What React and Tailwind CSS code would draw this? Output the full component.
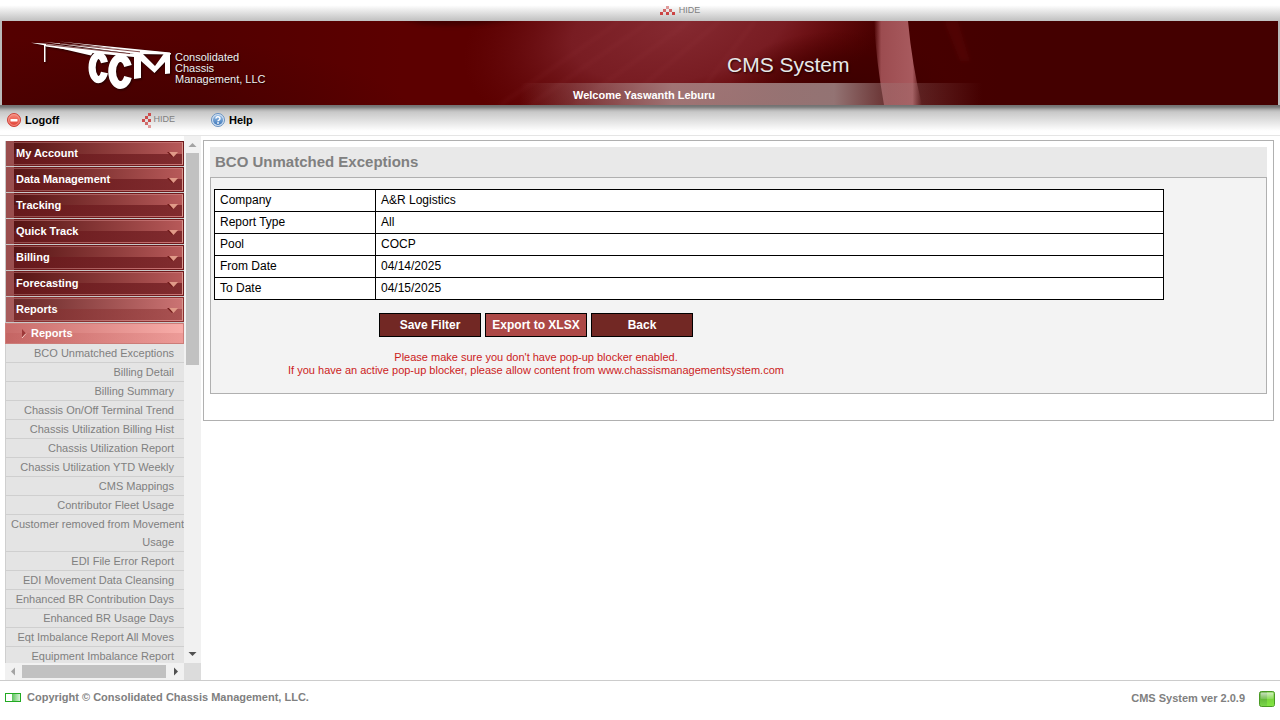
import React from "react";

const MENU = ["My Account", "Data Management", "Tracking", "Quick Track", "Billing", "Forecasting"];

const REPORTS = [
  "BCO Unmatched Exceptions",
  "Billing Detail",
  "Billing Summary",
  "Chassis On/Off Terminal Trend",
  "Chassis Utilization Billing Hist",
  "Chassis Utilization Report",
  "Chassis Utilization YTD Weekly",
  "CMS Mappings",
  "Contributor Fleet Usage",
  "Customer\u00a0removed\u00a0from\u00a0Movement Usage",
  "EDI File Error Report",
  "EDI Movement Data Cleansing",
  "Enhanced BR Contribution Days",
  "Enhanced BR Usage Days",
  "Eqt Imbalance Report All Moves",
  "Equipment Imbalance Report",
];

const FILTERS = [
  ["Company", "A&R Logistics"],
  ["Report Type", "All"],
  ["Pool", "COCP"],
  ["From Date", "04/14/2025"],
  ["To Date", "04/15/2025"],
];

function HideUpIcon() {
  return (
    <svg width="15" height="9" viewBox="0 0 15 9" shapeRendering="crispEdges" aria-hidden="true">
      <path fill="#e09a9a" d="M6 0h3v3h-3z" />
      <path fill="#d06a6a" d="M3 3h3v3h-3zM9 3h3v3h-3z" />
      <path fill="#cc4444" d="M0 6h3v3h-3zM6 6h3v3h-3zM12 6h3v3h-3z" />
    </svg>
  );
}

function HideLeftIcon() {
  return (
    <svg width="9" height="15" viewBox="0 0 9 15" shapeRendering="crispEdges" aria-hidden="true">
      <path fill="#cc4c4c" d="M6 0h3v3h-3zM3 3h3v3h-3zM0 6h3v3h-3zM6 6h3v3h-3z" />
      <path fill="#d06a6a" d="M3 9h3v3h-3z" />
      <path fill="#e09a9a" d="M6 12h3v3h-3z" />
    </svg>
  );
}

function LogoffIcon() {
  return (
    <svg width="14" height="14" viewBox="0 0 14 14" aria-hidden="true">
      <defs>
        <linearGradient id="red" x1="0" y1="0" x2="0" y2="1">
          <stop offset="0" stopColor="#f58a7c" />
          <stop offset="1" stopColor="#e03c30" />
        </linearGradient>
      </defs>
      <circle cx="7" cy="7" r="6.5" fill="url(#red)" stroke="#cc4038" />
      <circle cx="7" cy="7" r="5.4" fill="none" stroke="#f6a094" strokeWidth=".8" />
      <rect x="3.5" y="6" width="7" height="2.4" rx=".5" fill="#fff" />
    </svg>
  );
}

function HelpIcon() {
  return (
    <svg width="14" height="14" viewBox="0 0 14 14" aria-hidden="true">
      <defs>
        <linearGradient id="blue" x1="0" y1="0" x2="0" y2="1">
          <stop offset="0" stopColor="#9cc0e6" />
          <stop offset="1" stopColor="#3f78ba" />
        </linearGradient>
      </defs>
      <circle cx="7" cy="7" r="6.5" fill="#d4e2f2" stroke="#6690c0" />
      <circle cx="7" cy="7" r="5" fill="url(#blue)" />
      <path d="M5 5.6a2 1.8 0 1 1 3 1.5q-1 .5-1 1.2" fill="none" stroke="#fff" strokeWidth="1.5" />
      <rect x="6.2" y="9.2" width="1.6" height="1.6" fill="#fff" />
    </svg>
  );
}

function BannerArt() {
  return (
    <svg className="absolute left-0 top-0" width="1000" height="84" viewBox="2 21 1000 84" aria-hidden="true">
      <defs>
        <linearGradient id="base" x1="0" x2="1">
          <stop offset="0" stopColor="#540000" />
          <stop offset=".2" stopColor="#520000" />
          <stop offset=".4" stopColor="#5c0000" />
          <stop offset=".8" stopColor="#5c0000" />
          <stop offset=".87" stopColor="#480000" />
          <stop offset="1" stopColor="#440000" />
        </linearGradient>
        <radialGradient id="low" gradientUnits="userSpaceOnUse" cx="0" cy="0" r="1" gradientTransform="translate(120 125) scale(300 90)">
          <stop offset="0" stopColor="#300000" stopOpacity=".45" />
          <stop offset="1" stopColor="#300000" stopOpacity="0" />
        </radialGradient>
        <radialGradient id="glow" gradientUnits="userSpaceOnUse" cx="0" cy="0" r="1" gradientTransform="translate(680 25) rotate(-12) scale(220 110)">
          <stop offset="0" stopColor="#8a2e36" stopOpacity=".9" />
          <stop offset=".5" stopColor="#82262e" stopOpacity=".75" />
          <stop offset="1" stopColor="#6c1014" stopOpacity="0" />
        </radialGradient>
        <radialGradient id="shade" gradientUnits="userSpaceOnUse" cx="0" cy="0" r="1" gradientTransform="translate(850 85) scale(120 55)">
          <stop offset="0" stopColor="#3c0000" stopOpacity=".95" />
          <stop offset=".5" stopColor="#400000" stopOpacity=".7" />
          <stop offset="1" stopColor="#480000" stopOpacity="0" />
        </radialGradient>
        <linearGradient id="streak" x1="0" x2="1">
          <stop offset="0" stopColor="#a05054" stopOpacity="0" />
          <stop offset=".15" stopColor="#9c4c50" />
          <stop offset=".8" stopColor="#a85a5e" />
          <stop offset="1" stopColor="#a05054" stopOpacity="0" />
        </linearGradient>
        <linearGradient id="band" gradientUnits="userSpaceOnUse" x1="520" y1="0" x2="982" y2="0">
          <stop offset="0" stopColor="#a88484" stopOpacity="0" />
          <stop offset=".33" stopColor="#a88484" stopOpacity=".85" />
          <stop offset=".68" stopColor="#9c8080" stopOpacity=".9" />
          <stop offset=".8" stopColor="#a07878" stopOpacity=".4" />
          <stop offset="1" stopColor="#a07878" stopOpacity="0" />
        </linearGradient>
        <filter id="soft" x="-20%" y="-50%" width="140%" height="200%">
          <feGaussianBlur stdDeviation="2" />
        </filter>
      </defs>
      <rect x="2" y="21" width="1000" height="84" fill="url(#base)" />
      <rect x="2" y="21" width="1000" height="84" fill="url(#low)" />
      <rect x="400" y="21" width="602" height="84" fill="url(#glow)" />
      <path d="M390 16H530Q470 30 420 24Z" fill="#300000" opacity=".6" filter="url(#soft)" />
      <rect x="700" y="21" width="302" height="84" fill="url(#shade)" />
      <g stroke="#b05058" strokeWidth="2" opacity=".16" filter="url(#soft)">
        <path d="M620 21L500 105M650 21L530 105M690 21L575 105M720 21L620 105M755 21L690 105" />
      </g>
      <path d="M874 21H908Q912 65 922 105H884Q876 60 874 21Z" fill="url(#streak)" />
      <path d="M944 21h14l12 40h-10z" fill="#6a0808" opacity=".3" filter="url(#soft)" />
      <rect x="520" y="83" width="462" height="22" fill="url(#band)" />
    </svg>
  );
}

function Logo() {
  return (
    <svg width="144" height="54" viewBox="29 39 144 54" role="img" aria-label="CCM" className="drop-shadow-[1px_1px_1px_#200000]">
      <g fill="#fff">
        <path d="M31 42.800L44 43.500 134 54 134 57 92 53 46 46.500 44 45.200Z" />
        <path d="M44 42L171 53 171 54.500 134 54Z" />
        <path d="M59 41.500L170 52.500 170 54 120 49Z" />
        <path d="M50 46L94 51 91 55.500Z" />
        <path d="M44 45h1.500v17h-1.500z" />
        <path d="M134 54L143 54 155 66 164 53.500 170 53V73.500L165 74V62L154.500 73 141 61V78L134 79Z" />
      </g>
      <path d="M46 44.600L130 53.600M60 43.500L140 51.800" stroke="#500000" strokeWidth=".7" />
      <g fill="none" stroke="#fff">
        <path d="M104.500 62.500A6.500 12 0 1 0 104.500 72.500" strokeWidth="7.200" />
        <path d="M128 66A8.300 13.500 0 1 0 128 77" strokeWidth="7.800" />
      </g>
    </svg>
  );
}

function MenuButton({ label, open }) {
  return (
    <button
      type="button"
      aria-expanded={!!open}
      className="flex h-[26px] w-full border-b border-l border-[#c8c8c8] text-left text-[11px] font-bold text-white"
    >
      <span className={"h-full w-2 " + (open ? "bg-[#a85c5c]" : "bg-[#9a4e4e]")} />
      <span
        className={
          "h-full flex-1 border-y border-r bg-linear-to-r " +
          (open
            ? "border-[#8a3030] from-[#682828] to-[#cc7474]"
            : "border-[#6e1a1c] from-[#561414] to-[#b85a5a]")
        }
      >
        <span className="block h-full border-y border-r border-y-[#e8a0a0]/40 border-r-[#d89a90]">
          <span
            className={
              "flex h-full items-center justify-between pl-[2px] pr-[3px] " +
              (open
                ? "bg-[linear-gradient(to_bottom,transparent_50%,#88303080_50%)]"
                : "bg-[linear-gradient(to_bottom,transparent_50%,#6c1a1eb8_50%)]")
            }
          >
            {label}
            <svg width="12" height="6" viewBox="0 0 12 6" className="mt-[3px]" aria-hidden="true">
              <path d="M0 0H10L5 5Z" fill="#701818" />
              <path d="M2 0H11L6.500 5Z" fill="#e09a88" />
            </svg>
          </span>
        </span>
      </span>
    </button>
  );
}

function Sidebar() {
  return (
    <div className="flex w-[201px] shrink-0 flex-col pl-[5px]">
      <div className="flex min-h-0 flex-1">
        <nav className="min-w-0 flex-1 overflow-hidden pt-[5px]">
          {MENU.map((m) => (
            <MenuButton key={m} label={m} />
          ))}
          <MenuButton label="Reports" open />
          <button
            type="button"
            className="flex h-[21px] w-full items-center gap-1 border border-[#cc7c78] bg-[linear-gradient(to_bottom,transparent_50%,#b0404028_50%),linear-gradient(to_right,#c86c6a,#f8aca8)] pl-[15px] text-[11px] font-bold text-white"
          >
            <svg width="6" height="9" viewBox="0 0 6 9" aria-hidden="true">
              <path d="M1 0L5 4.500 1 9Z" fill="#9c3838" />
              <path d="M1 9L5 4.500" stroke="#f8d0c8" />
            </svg>
            Reports
          </button>
          <ul className="border-l border-[#cfcfcf] bg-[#e4e4e4] text-right text-[11px] leading-[18px] text-[#808080]">
            {REPORTS.map((r) => (
              <li key={r} className="border-b border-[#cfcfcf]">
                <a href="#" className="block pl-[5px] pr-[10px]">{r}</a>
              </li>
            ))}
          </ul>
        </nav>
        <div className="flex w-[17px] flex-col items-center bg-[#f1f1f1]">
          <svg width="17" height="17" viewBox="0 0 17 17" aria-hidden="true">
            <path d="M4.500 11L8.500 7 12.500 11Z" fill="#a3a3a3" />
          </svg>
          <div className="min-h-0 w-full flex-1 px-[2px]">
            <div className="h-[43%] bg-[#c1c1c1]" />
          </div>
          <svg width="17" height="17" viewBox="0 0 17 17" aria-hidden="true">
            <path d="M4.500 6L8.500 10 12.500 6Z" fill="#505050" />
          </svg>
        </div>
      </div>
      <div className="flex h-[17px] shrink-0">
        <div className="flex flex-1 items-center bg-[#f1f1f1]">
          <svg width="17" height="17" viewBox="0 0 17 17" aria-hidden="true">
            <path d="M10 4.500L6 8.500 10 12.500Z" fill="#a3a3a3" />
          </svg>
          <div className="h-[13px] flex-1 bg-[#c1c1c1]" />
          <svg width="18" height="17" viewBox="0 0 18 17" aria-hidden="true">
            <path d="M8 4.500L12 8.500 8 12.500Z" fill="#505050" />
          </svg>
        </div>
        <div className="w-[17px] bg-[#dcdcdc]" />
      </div>
    </div>
  );
}

function ActionButton({ children, active }) {
  return (
    <button
      type="button"
      className={"h-6 w-[102px] border border-black text-[12px] font-bold text-white " + (active ? "bg-[#ac4846]" : "bg-[#722824]")}
    >
      {children}
    </button>
  );
}

export default function App() {
  return (
    <div className="flex h-screen flex-col overflow-hidden bg-white font-['Liberation_Sans',Arial,sans-serif] text-black">
      <div className="flex h-[21px] shrink-0 justify-center bg-linear-to-b from-white from-25% to-[#c0c0c0] pl-20">
        <button type="button" className="flex items-center gap-1 text-[9px] text-[#808080]">
          <HideUpIcon />
          HIDE
        </button>
      </div>

      <header className="shrink-0 bg-[#bababa] px-[2px]">
        <div className="relative h-[84px] overflow-hidden bg-[#440000]">
          <BannerArt />
          <div className="relative flex h-full">
            <div className="flex w-[571px] items-start gap-[2px] pl-[27px] pt-[18px]">
              <Logo />
              <p className="pt-[13px] text-[11px] leading-[11px] text-[#eeeeee] [text-shadow:1px_1px_1px_#200000]">
                Consolidated
                <br />
                Chassis
                <br />
                Management, LLC
              </p>
            </div>
            <div className="flex flex-col justify-end">
              <h1 className="pb-[6px] pl-[154px] text-[21px] leading-6 text-[#e8e8e8] [text-shadow:1px_1px_2px_#200000]">CMS System</h1>
              <p className="h-[22px] text-[11px] font-bold leading-6 text-white">Welcome Yaswanth Leburu</p>
            </div>
          </div>
        </div>
      </header>

      <div className="flex h-[31px] shrink-0 items-center border-b border-[#e5e5e5] bg-[linear-gradient(to_bottom,#707070_0px,#7c7c7c_2px,#b4b4b4_5px,#c8c8c8_7px,#fff_26px)] text-[11px] font-bold">
        <div className="flex w-[211px] items-center pl-[7px]">
          <a href="#" className="flex items-center gap-1">
            <LogoffIcon />
            Logoff
          </a>
          <button type="button" className="ml-auto mr-[36px] flex items-center gap-[2px] text-[9px] font-normal text-[#808080]">
            <HideLeftIcon />
            HIDE
          </button>
        </div>
        <a href="#" className="flex items-center gap-1">
          <HelpIcon />
          Help
        </a>
      </div>

      <div className="flex min-h-0 flex-1">
        <Sidebar />
        <main className="min-w-0 flex-1 pl-[2px] pr-[6px] pt-1">
          <section className="border border-[#b0b0b0] px-[6px] pb-[26px] pt-[6px]">
            <h2 className="bg-[#e9e9e9] pl-[5px] text-[15px] font-bold leading-[30px] text-[#808080]">BCO Unmatched Exceptions</h2>
            <div className="border border-[#b0b0b0] bg-[#f3f3f3] pb-[16px] pl-[3px] pt-[11px]">
              <div className="pr-[102px]">
                <table className="w-full border-collapse bg-white text-[12px]">
                  <tbody>
                    {FILTERS.map(([k, v]) => (
                      <tr key={k} className="h-[22px]">
                        <th scope="row" className="w-[161px] border border-black pb-[2px] pl-[5px] text-left font-normal leading-4">{k}</th>
                        <td className="border border-black pb-[2px] pl-[5px] leading-4">{v}</td>
                      </tr>
                    ))}
                  </tbody>
                </table>
              </div>
              <div className="w-[644px] max-w-full pt-[13px]">
                <div className="flex justify-center gap-1">
                  <ActionButton>Save Filter</ActionButton>
                  <ActionButton active>Export to XLSX</ActionButton>
                  <ActionButton>Back</ActionButton>
                </div>
                <p className="pt-[14px] text-center text-[11px] leading-[13px] text-[#cc1c1c]">
                  Please make sure you don't have pop-up blocker enabled.
                  <br />
                  If you have an active pop-up blocker, please allow content from www.chassismanagementsystem.com
                </p>
              </div>
            </div>
          </section>
        </main>
      </div>

      <footer className="flex h-10 shrink-0 items-center justify-between border-t border-[#cccccc] px-[5px] text-[11px] font-bold text-[#808080]">
        <div className="flex items-center gap-[6px] pb-[6px]">
          <svg width="16" height="9" viewBox="0 0 16 9" aria-hidden="true">
            <defs>
              <linearGradient id="leaf" x1="0" x2="1">
                <stop offset="0" stopColor="#5cc45c" />
                <stop offset="1" stopColor="#d8f4d8" />
              </linearGradient>
            </defs>
            <rect x=".5" y=".5" width="15" height="8" fill="#fff" stroke="#22aa22" />
            <rect x="7" y="1" width="8" height="7" fill="url(#leaf)" />
          </svg>
          Copyright © Consolidated Chassis Management, LLC.
        </div>
        <div className="flex items-center gap-[14px] pb-[4px]">
          CMS System ver 2.0.9
          <svg width="16" height="16" viewBox="0 0 16 16" aria-hidden="true">
            <defs>
              <linearGradient id="gem" x1="0" y1="0" x2="0" y2="1">
                <stop offset="0" stopColor="#4c9a28" />
                <stop offset="1" stopColor="#7cd84c" />
              </linearGradient>
              <linearGradient id="gemlight" x1="0" y1="0" x2="0" y2="1">
                <stop offset="0" stopColor="#fff" stopOpacity=".7" />
                <stop offset="1" stopColor="#fff" stopOpacity=".15" />
              </linearGradient>
            </defs>
            <rect x=".5" y=".5" width="15" height="15" rx="2" fill="url(#gem)" stroke="#4a9a24" />
            <rect x="8" y="1" width="7" height="14" fill="#8cf040" opacity=".55" />
            <rect x="1.500" y="1.500" width="13" height="6.500" rx="1" fill="url(#gemlight)" />
          </svg>
        </div>
      </footer>
    </div>
  );
}
